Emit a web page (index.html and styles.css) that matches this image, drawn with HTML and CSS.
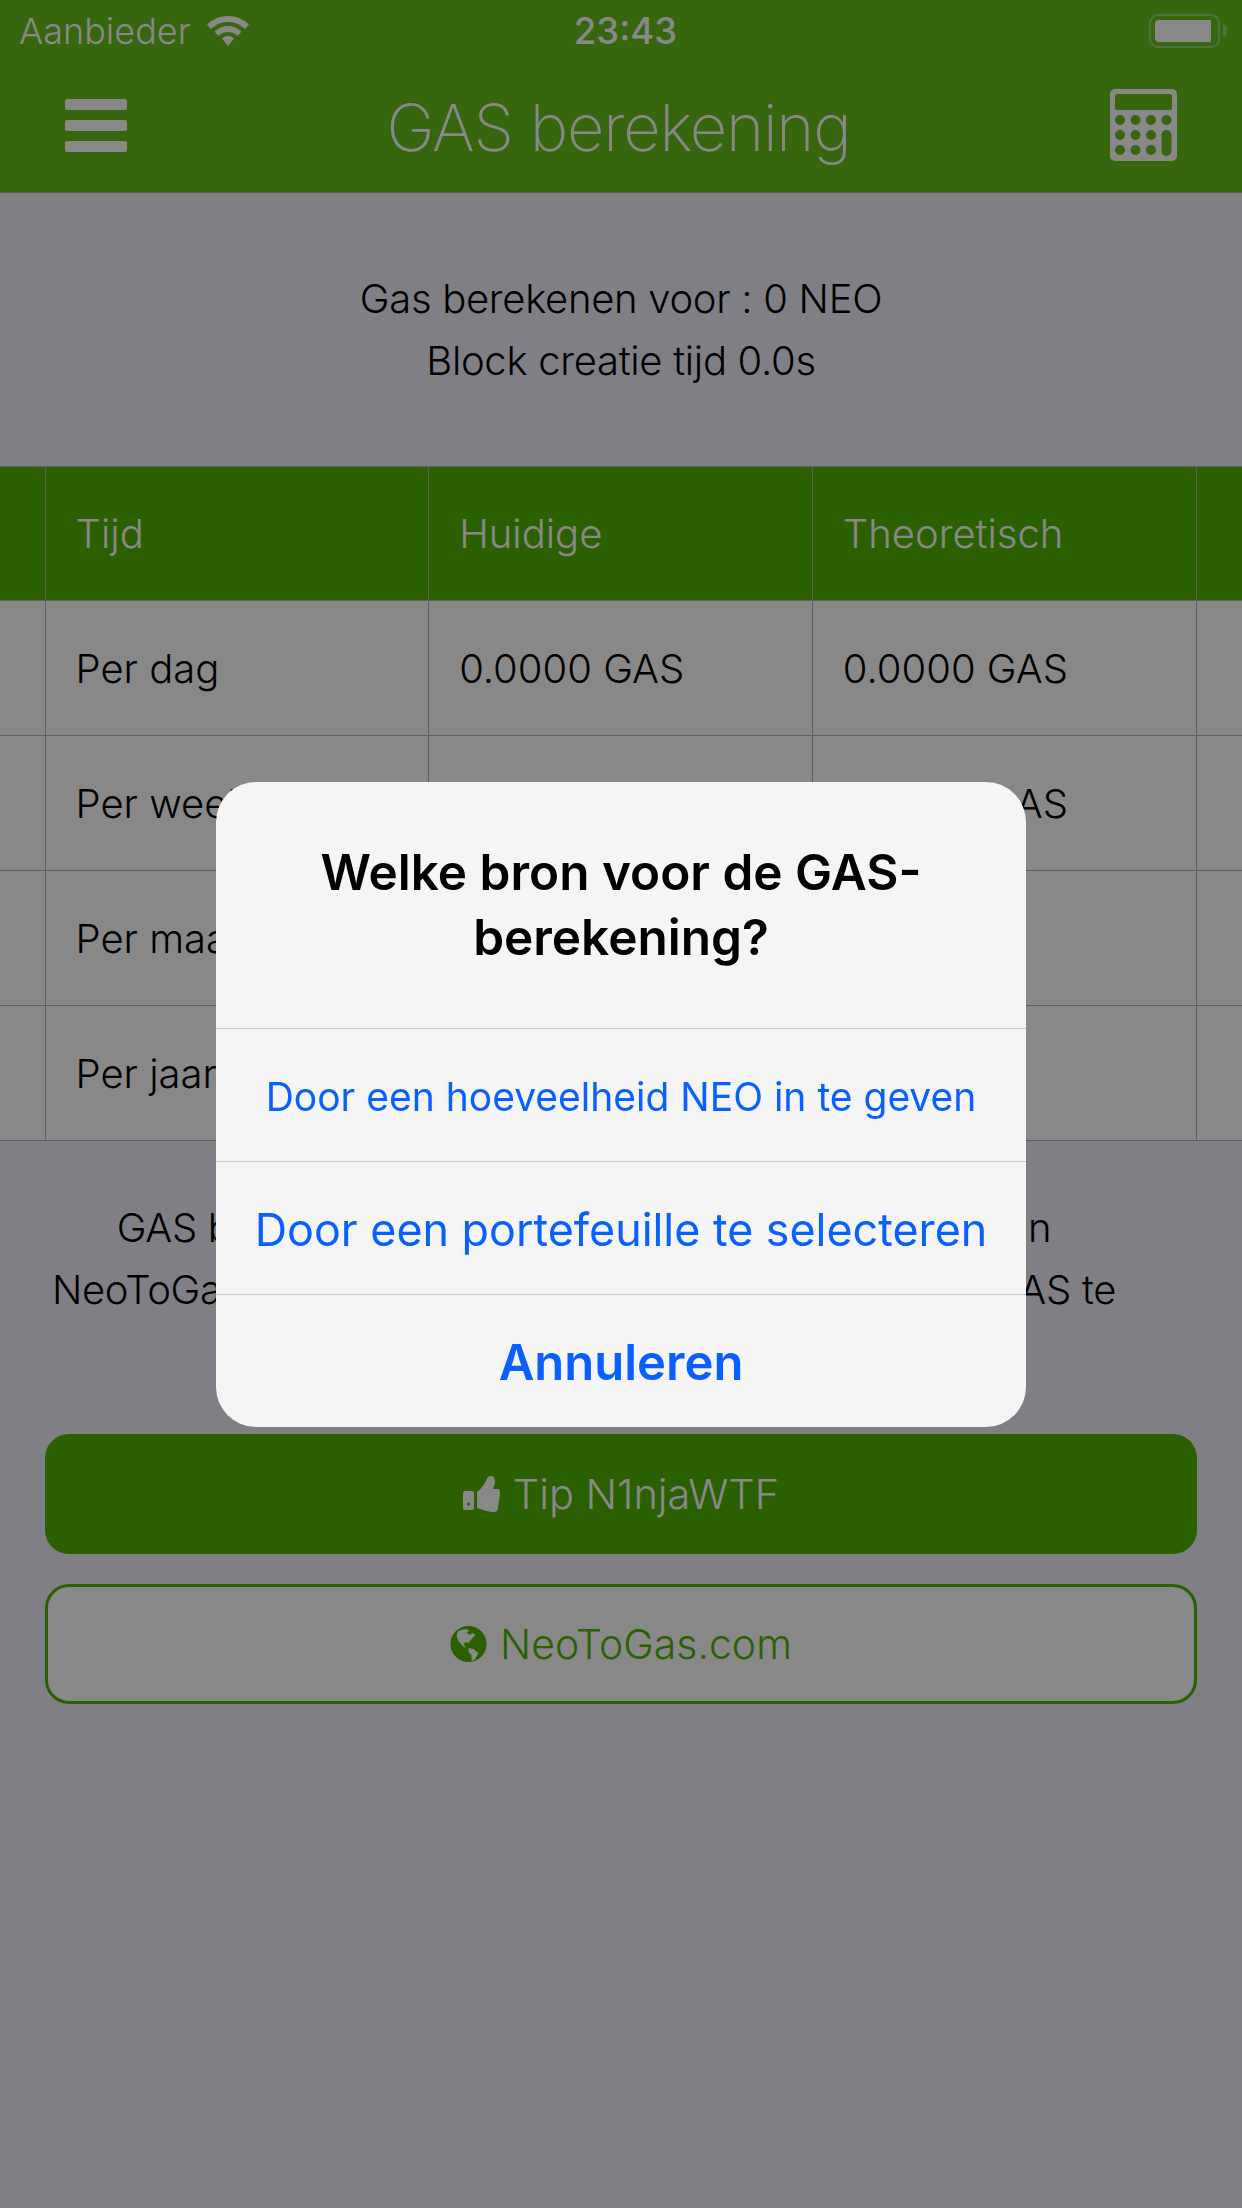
FILE: index.html
```html
<!DOCTYPE html>
<html lang="nl">
<head>
  <meta charset="UTF-8" />
  <meta name="viewport" content="width=device-width, initial-scale=1.0"/>
  <title>GAS berekening</title>
  <link rel="stylesheet" href="styles.css">
</head>
<body>
  <div class="page">
    <div class="nav">
      <div class="status">
        <div class="status-left">
          <span>Aanbieder</span>
          <svg class="wifi" viewBox="0 0 42 30" aria-hidden="true">
            <path d="M21 0C13 0 6 3 0 8.5L4 13C9 8.5 15 6 21 6C27 6 33 8.5 38 13L42 8.5C36 3 29 0 21 0Z"/>
            <path d="M21 10C16 10 11.5 12 7.5 15.5L11.5 20C14 17.5 17.5 16 21 16C24.5 16 28 17.5 30.5 20L34.5 15.5C30.5 12 26 10 21 10Z"/>
            <path d="M21 20C18.5 20 16.5 21 15 22.5L21 30L27 22.5C25.5 21 23.5 20 21 20Z"/>
          </svg>
        </div>
        <div class="time">23:43</div>
        <div class="battery">
          <div class="battery-body"><div class="battery-fill"></div></div>
          <div class="battery-nub"></div>
        </div>
      </div>
      <div class="toolbar">
        <div class="burger"><i></i><i></i><i></i></div>
        <h1>GAS berekening</h1>
        <svg class="calc" viewBox="0 0 67 72" aria-hidden="true">
          <rect width="67" height="72" rx="5" fill="#fff"/>
          <g fill="#65bf1c">
            <rect x="5" y="5" width="57" height="16" rx="2"/>
            <circle cx="10" cy="31" r="5"/><circle cx="25.5" cy="31" r="5"/><circle cx="41" cy="31" r="5"/><circle cx="56.5" cy="31" r="5"/>
            <circle cx="10" cy="46" r="5"/><circle cx="25.5" cy="46" r="5"/><circle cx="41" cy="46" r="5"/>
            <circle cx="10" cy="61" r="5"/><circle cx="25.5" cy="61" r="5"/><circle cx="41" cy="61" r="5"/>
            <rect x="51.5" y="41" width="10" height="26" rx="5"/>
          </g>
        </svg>
      </div>
    </div>

    <div class="intro">
      <div>Gas berekenen voor : 0 NEO</div>
      <div>Block creatie tijd 0.0s</div>
    </div>

    <table class="rates">
      <thead>
        <tr><th class="edge"></th><th>Tijd</th><th>Huidige</th><th>Theoretisch</th><th class="edge edge-right"></th></tr>
      </thead>
      <tbody>
        <tr><td class="edge"></td><td>Per dag</td><td>0.0000 GAS</td><td>0.0000 GAS</td><td class="edge edge-right"></td></tr>
        <tr><td class="edge"></td><td>Per week</td><td></td><td>0.0000 GAS</td><td class="edge edge-right"></td></tr>
        <tr><td class="edge"></td><td>Per maand</td><td></td><td></td><td class="edge edge-right"></td></tr>
        <tr><td class="edge"></td><td>Per jaar</td><td></td><td></td><td class="edge edge-right"></td></tr>
      </tbody>
    </table>

    <p class="note">GAS berekening wordt gedaan door een dienst van<br>NeoToGas.com. Gebruik de knoppen om meer van GAS te</p>

    <div class="actions">
      <a class="btn btn-solid">
        <svg class="btn-icon" viewBox="0 0 37 36" aria-hidden="true">
          <path fill-rule="evenodd" d="M2 15H9A2 2 0 0 1 11 17V32A2 2 0 0 1 9 34H2A2 2 0 0 1 0 32V17A2 2 0 0 1 2 15ZM5.500 26.500A1.500 1.500 0 1 0 5.500 29.500A1.500 1.500 0 1 0 5.500 26.500Z"/>
          <path d="M14 16C17 14 21 9 23 5C24 1 26 0 28 0C31 0 32 3 32 6C32 9 30 11 30 13H35C37 13 37 16 37 18L35 32C34.500 35 33 36 31 36C26 36 20 34 14 32Z"/>
        </svg>
        Tip N1njaWTF
      </a>
      <a class="btn btn-outline">
        <svg class="btn-icon" viewBox="0 0 36 36" aria-hidden="true">
          <circle cx="18" cy="18" r="18"/>
          <path class="land" d="M7 6C10 3 14 4 16 3L19 5L16 6L19 9L22 7L25 9L21 13L18 17L15 16L13 18L16 22L12 20L8 15L6 10Z"/>
          <path class="land" d="M18 22L23 23L28 27L24 34L21 35L21 29L18 26Z"/>
        </svg>
        NeoToGas.com
      </a>
    </div>
  </div>

  <div class="overlay">
    <div class="alert">
      <div class="alert-title">Welke bron voor de GAS-<br>berekening?</div>
      <div class="alert-row alert-small">Door een hoeveelheid NEO in te geven</div>
      <div class="alert-row alert-medium">Door een portefeuille te selecteren</div>
      <div class="alert-row alert-cancel">Annuleren</div>
    </div>
  </div>
</body>
</html>
```

FILE: styles.css
```css
* {
  box-sizing: border-box;
}

html, body {
  margin: 0;
  height: 100%;
}

body {
  font-family: Inter, "Liberation Sans", sans-serif;
  font-weight: 300;
  background: #eeeefa;
  color: #000;
  overflow: hidden;
}

.page {
  height: 100%;
}

.nav {
  background: #65bf1c;
  color: #fff;
  height: 193px;
  border-bottom: 1px solid #b2b2b2;
}

.status {
  height: 62px;
  padding: 0 15px 0 19px;
  display: grid;
  grid-template-columns: 1fr auto 1fr;
  align-items: center;
  font-size: 36px;
}

.status-left {
  display: flex;
  align-items: center;
  gap: 16px;
}

.wifi {
  width: 42px;
  height: 30px;
  fill: #fff;
}

.time {
  padding-left: 5px;
  font-weight: 500;
  font-size: 36.5px;
}

.battery {
  justify-self: end;
  display: flex;
  align-items: center;
  gap: 3px;
}

.battery-body {
  width: 71px;
  height: 34px;
  padding: 4px;
  border: 2px solid rgba(255,255,255,0.35);
  border-radius: 9px;
}

.battery-fill {
  width: 56px;
  height: 22px;
  background: #fff;
  border-radius: 4px 0 0 4px;
}

.battery-nub {
  width: 4px;
  height: 12px;
  background: rgba(255,255,255,0.35);
  border-radius: 0 4px 4px 0;
}

.toolbar {
  height: 130px;
  padding: 0 65px;
  display: flex;
  align-items: center;
  justify-content: space-between;
}

.burger {
  width: 62px;
  margin-bottom: 4px;
  display: flex;
  flex-direction: column;
  gap: 10px;
}

.burger i {
  display: block;
  height: 11px;
  background: #fff;
  border-radius: 2px;
}

.toolbar h1 {
  margin: 0;
  font-size: 65px;
  font-weight: 200;
  letter-spacing: -1.2px;
}

.calc {
  width: 67px;
  height: 72px;
  margin-bottom: 4px;
}

.intro {
  height: 273px;
  display: flex;
  flex-direction: column;
  justify-content: center;
  align-items: center;
  font-size: 40px;
  line-height: 62px;
  letter-spacing: -0.3px;
}

.rates {
  width: 100%;
  border-collapse: collapse;
  table-layout: fixed;
  background: #fff;
  font-size: 40px;
}

.rates th, .rates td {
  height: 135px;
  padding: 0 30px;
  text-align: left;
  font-weight: 300;
  border: 1px solid #b2b2b2;
}

.rates th {
  height: 134px;
  background: #4fb400;
  color: #fff;
}

.rates .edge {
  width: 45px;
  padding: 0;
  border-left: 0;
  border-right: 0;
}

.rates .edge-right {
  width: 46px;
}

.note {
  margin: 56px 0 0;
  padding-right: 74px;
  text-align: center;
  font-size: 40px;
  line-height: 62px;
  letter-spacing: -0.3px;
  height: 237px;
}

.actions {
  margin: 0 45px;
  display: flex;
  flex-direction: column;
  gap: 30px;
}

.btn {
  height: 120px;
  border-radius: 24px;
  display: flex;
  align-items: center;
  justify-content: center;
  gap: 13px;
  font-size: 41.5px;
}

.btn-icon {
  width: 37px;
  height: 36px;
  fill: currentColor;
}

.btn-solid {
  background: #4fb400;
  color: #fff;
}

.btn-outline {
  background: #fff;
  color: #4fb400;
  border: 3px solid #4fb400;
  font-size: 41px;
}

.land {
  fill: #fff;
}

.overlay {
  position: fixed;
  inset: 0;
  background: rgba(0,0,0,0.467);
  display: flex;
  align-items: center;
  justify-content: center;
}

.alert {
  width: 810px;
  background: #f5f5f6;
  border-radius: 40px;
  overflow: hidden;
  text-align: center;
  font-weight: 400;
}

.alert-title {
  height: 246px;
  padding-top: 58px;
  font-size: 49.5px;
  line-height: 65px;
  font-weight: 600;
}

.alert-row {
  height: 133px;
  padding-top: 4px;
  border-top: 1px solid #c9c9cb;
  display: flex;
  align-items: center;
  justify-content: center;
  color: #0a60ff;
}

.alert-small {
  font-size: 39px;
}

.alert-medium {
  font-size: 44.8px;
}

.alert-cancel {
  font-size: 49px;
  font-weight: 600;
}
```
